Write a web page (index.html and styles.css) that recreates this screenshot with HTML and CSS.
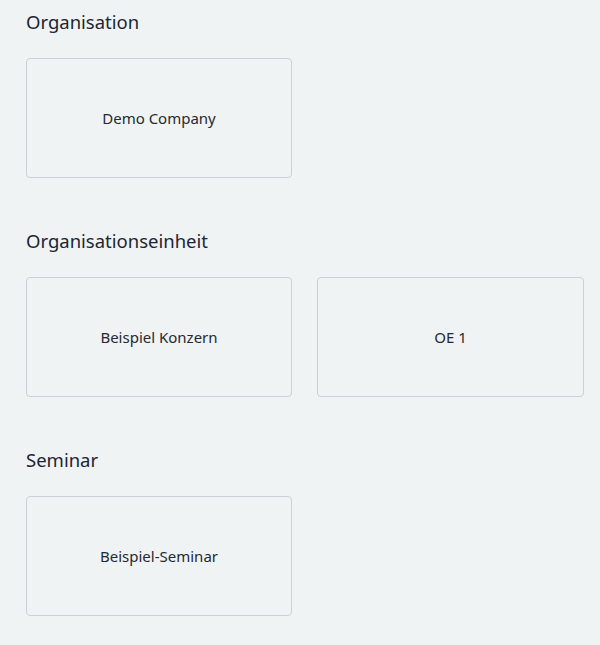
FILE: index.html
```html
<!DOCTYPE html>
<html lang="de">
<head>
<meta charset="utf-8">
<link rel="stylesheet" href="styles.css">
</head>
<body>
<main class="page">
  <section class="section">
    <h2 class="section-title">Organisation</h2>
    <div class="cards">
      <div class="card">Demo Company</div>
    </div>
  </section>
  <section class="section">
    <h2 class="section-title">Organisationseinheit</h2>
    <div class="cards">
      <div class="card">Beispiel Konzern</div>
      <div class="card">OE 1</div>
    </div>
  </section>
  <section class="section">
    <h2 class="section-title">Seminar</h2>
    <div class="cards">
      <div class="card">Beispiel-Seminar</div>
    </div>
  </section>
</main>
</body>
</html>
```

FILE: styles.css
```css
html, body {
  margin: 0;
  padding: 0;
  background: #eff3f4;
}
body {
  font-family: "Noto Sans", "Open Sans", sans-serif;
  color: #212529;
}
.page {
  padding: 10px 16px 0 26px;
  display: flex;
  flex-direction: column;
  gap: 51px;
}
.section-title {
  margin: 0 0 24px;
  font-size: 18.5px;
  line-height: 24px;
  font-weight: 400;
  color: #1e2533;
}
.cards {
  display: grid;
  grid-template-columns: 266px 267px;
  gap: 25px;
}
.card {
  height: 118px;
  border: 1px solid #cdd1d4;
  border-radius: 4px;
  display: flex;
  align-items: center;
  justify-content: center;
  font-size: 15px;
  color: #252a30;
}
```
